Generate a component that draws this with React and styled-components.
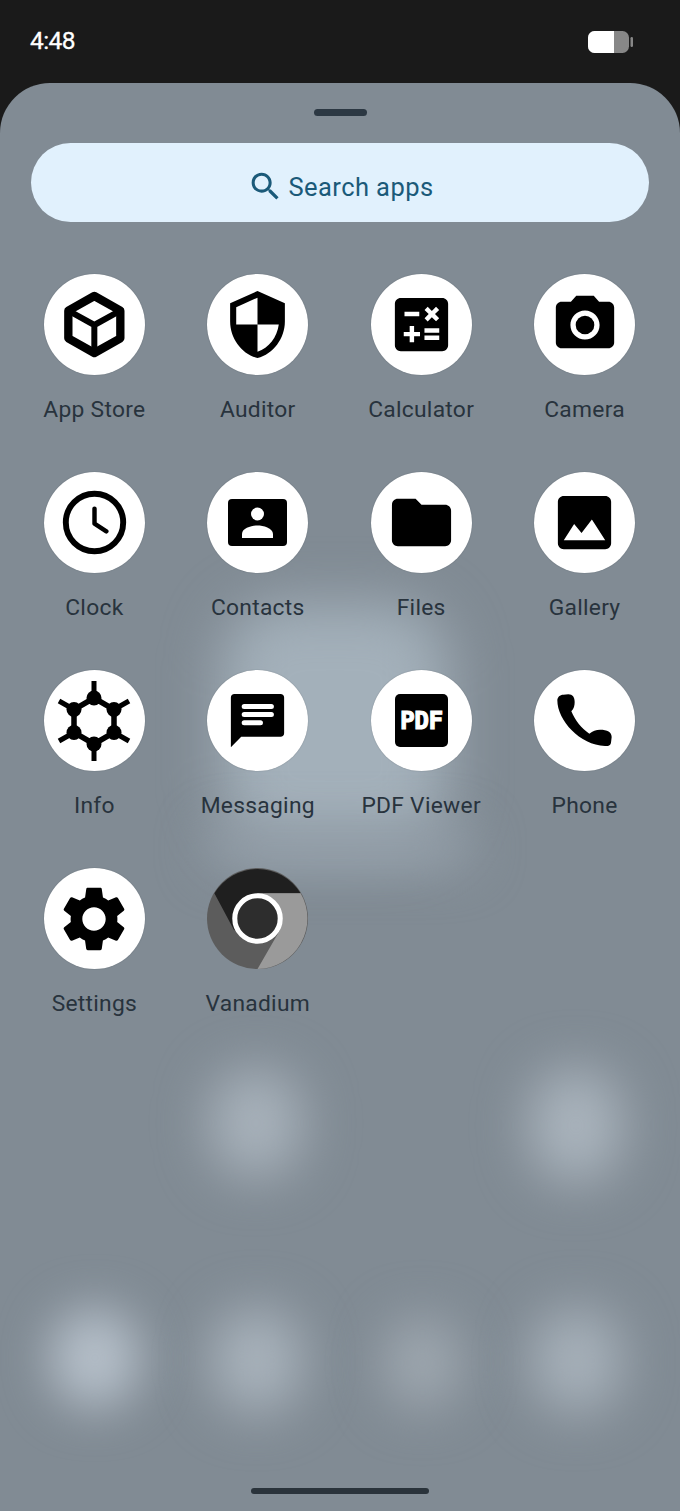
import React from "react";
import styled, { createGlobalStyle } from "styled-components";

const Global = createGlobalStyle`
  html, body { margin: 0; padding: 0; background: #1a1a1a; }
  * { box-sizing: border-box; }
`;

const Phone = styled.div`
  width: 680px;
  height: 1511px;
  display: flex;
  flex-direction: column;
  background: #1a1a1a;
  font-family: Roboto, "Liberation Sans", sans-serif;
  overflow: hidden;
`;

const StatusBar = styled.header`
  height: 83px;
  flex: none;
  display: flex;
  align-items: flex-start;
  justify-content: space-between;
  padding: 25px 46px 0 30px;
`;

const Time = styled.span`
  color: #fff;
  font-size: 24.5px;
  font-weight: 400;
  line-height: 31px;
  letter-spacing: -0.6px;
  -webkit-text-stroke: 0.3px #fff;
`;

const Battery = styled.svg`
  width: 46px;
  height: 24px;
  margin-top: 5px;
`;

const Sheet = styled.main`
  flex: 1;
  position: relative;
  display: flex;
  flex-direction: column;
  background: #818b94;
  border-radius: 50px 50px 0 0;
  overflow: hidden;
`;

const Glow = styled.div`
  position: absolute;
  left: ${(p) => p.$x}px;
  top: ${(p) => p.$y}px;
  width: ${(p) => p.$w}px;
  height: ${(p) => p.$h}px;
  background: ${(p) => p.$c};
  border-radius: ${(p) => p.$r}px;
  filter: blur(${(p) => p.$b}px);
`;

const Handle = styled.div`
  position: relative;
  flex: none;
  width: 53px;
  height: 7px;
  margin: 26px auto 0;
  border-radius: 3.5px;
  background: #2c3843;
`;

const SearchBar = styled.div`
  position: relative;
  flex: none;
  height: 79px;
  margin: 27px 31px 0;
  padding: 8px 0 0;
  border-radius: 39.5px;
  background: #e1f1fd;
  display: flex;
  align-items: center;
  justify-content: center;
  gap: 5px;
  color: #1b5a79;
  font-size: 25.5px;
  letter-spacing: 0.42px;
`;

const Grid = styled.section`
  position: relative;
  display: grid;
  grid-template-columns: repeat(4, 163.4px);
  grid-auto-rows: 198px;
  margin: 52px 0 0 12.7px;
`;

const Tile = styled.div`
  display: flex;
  flex-direction: column;
  align-items: center;
`;

const Disc = styled.div`
  width: 101px;
  height: 101px;
  border-radius: 50%;
  background: #fff;
  display: flex;
  align-items: center;
  justify-content: center;
  box-shadow: 0 0 1px rgba(40, 50, 60, 0.5);
`;

const Glyph = styled.svg`
  width: ${(p) => p.$size}px;
  height: ${(p) => p.$size}px;
  display: block;
  flex: none;
`;

const Round = styled.svg`
  width: 101px;
  height: 101px;
  display: block;
`;

const Label = styled.span`
  margin-top: 20px;
  font-size: 22.8px;
  line-height: 30px;
  letter-spacing: 0.28px;
  color: #28333d;
  white-space: nowrap;
`;

const HomeBar = styled.div`
  position: relative;
  flex: none;
  width: 178px;
  height: 6px;
  margin: auto auto 17px;
  border-radius: 3px;
  background: #2a333b;
`;

const M = ({ d, size = 71, children }) => (
  <Glyph $size={size} viewBox="0 0 24 24" fill="#000">
    {d && <path d={d} />}
    {children}
  </Glyph>
);

const icons = {
  store: (
    <Glyph $size={71} viewBox="0 0 213 213" fill="none" stroke="#000" strokeLinejoin="round" strokeLinecap="round">
      <path d="M106 21 L184 65 L184 148 L106 192 L28 148 L28 65 Z" strokeWidth="25" />
      <path d="M28 65 L106 108 L184 65 M106 108 L106 192" strokeWidth="18" />
    </Glyph>
  ),
  shield: <M size={73} d="M12 1L3 5v6c0 5.55 3.84 10.74 9 12 5.16-1.26 9-6.45 9-12V5l-9-4zm0 10.99h7c-.53 4.12-3.28 7.79-7 8.94V12H5V6.3l7-3.11v8.8z" />,
  calc: <M d="M19 3H5c-1.1 0-2 .9-2 2v14c0 1.1.9 2 2 2h14c1.1 0 2-.9 2-2V5c0-1.1-.9-2-2-2zm-5.97 4.06L14.09 6l1.41 1.41L16.91 6l1.06 1.06-1.41 1.41 1.41 1.41-1.06 1.06-1.41-1.4-1.41 1.41-1.06-1.06 1.41-1.41-1.41-1.42zm-6.78.66h5v1.5h-5v-1.5zM11.5 16h-2v2H8v-2H6v-1.5h2v-2h1.5v2h2V16zm6.5 1.25h-5v-1.5h5v1.5zm0-2.5h-5v-1.5h5v1.5z" />,
  camera: (
    <M size={70} d="M9 2L7.17 4H4c-1.1 0-2 .9-2 2v12c0 1.1.9 2 2 2h16c1.1 0 2-.9 2-2V6c0-1.1-.9-2-2-2h-3.17L15 2H9zm3 15c-2.76 0-5-2.24-5-5s2.24-5 5-5 5 2.24 5 5-2.24 5-5 5z">
      <circle cx="12" cy="12" r="3.2" />
    </M>
  ),
  clock: (
    <M>
      <circle cx="12" cy="12" r="9.7" fill="none" stroke="#000" strokeWidth="2" />
      <path d="M12 7.3V12.4L16 15" fill="none" stroke="#000" strokeWidth="1.5" strokeLinecap="round" strokeLinejoin="round" />
    </M>
  ),
  contacts: (
    <Glyph $size={71} viewBox="0 0 71 71">
      <rect x="6" y="12" width="59" height="47" rx="4" fill="#000" />
      <circle cx="35.5" cy="27" r="6.5" fill="#fff" />
      <path d="M20 51V47C20 41 30 38.5 35.5 38.5S51 41 51 47V51Z" fill="#fff" />
    </Glyph>
  ),
  files: <M d="M10 4H4c-1.1 0-1.99.9-1.99 2L2 18c0 1.1.9 2 2 2h16c1.1 0 2-.9 2-2V8c0-1.1-.9-2-2-2h-8l-2-2z" />,
  gallery: <M d="M21 19V5c0-1.1-.9-2-2-2H5c-1.1 0-2 .9-2 2v14c0 1.1.9 2 2 2h14c1.1 0 2-.9 2-2zM8.5 12.5l2.5 3.01L14.5 11l4.5 7H5l3.5-5.5z" />,
  info: (
    <Glyph $size={84} viewBox="-42 -42 84 84" fill="#000" stroke="#000" strokeLinecap="butt">
      <path d="M0 -23L20 -11.5V11.5L0 23L-20 11.5V-11.5Z" fill="none" strokeWidth="5.5" />
      <path d="M0 -40V-23M0 40V23M-35 -20L-20 -11.5M35 -20L20 -11.5M-35 20L-20 11.5M35 20L20 11.5" strokeWidth="5" />
      <g stroke="none">
        <circle cx="0" cy="-23" r="7.5" />
        <circle cx="0" cy="23" r="7.5" />
        <circle cx="-20" cy="-11.5" r="7.5" />
        <circle cx="20" cy="-11.5" r="7.5" />
        <circle cx="-20" cy="11.5" r="7.5" />
        <circle cx="20" cy="11.5" r="7.5" />
      </g>
    </Glyph>
  ),
  msg: (
    <M>
      <path d="M4.2 3H19.8C20.5 3 21 3.5 21 4.2V16.3C21 17 20.5 17.5 19.8 17.5H6.5L3 21V4.2C3 3.5 3.5 3 4.2 3Z" />
      <path d="M7.5 7.3H16.7M7.5 10H16.7M7.5 12.75H13" stroke="#fff" strokeWidth="1.7" strokeLinecap="round" />
    </M>
  ),
  pdf: (
    <Glyph $size={71} viewBox="0 0 71 71">
      <rect x="9" y="9" width="53" height="53" rx="5" fill="#000" />
      <text x="35.5" y="44" textAnchor="middle" fill="#fff" stroke="#fff" strokeWidth="1" fontFamily="'DejaVu Sans Mono', monospace" fontWeight="700" fontSize="24.5" letterSpacing="-0.5">PDF</text>
    </Glyph>
  ),
  phone: (
    <Glyph $size={71} viewBox="597 59 213 213">
      <path d="M640 88L655 87C668 87 674 96 674 110C674 120 672 130 664 138C675 165 695 190 718 205C728 197 738 193 750 193C772 193 785 200 785 215L783 232C782 240 775 243 765 242C690 240 622 165 622 105C622 95 630 88 640 88Z" />
    </Glyph>
  ),
  gear: <M size={78} d="M19.14 12.94c.04-.3.06-.61.06-.94 0-.32-.02-.64-.07-.94l2.03-1.58c.18-.14.23-.41.12-.61l-1.92-3.32c-.12-.22-.37-.29-.59-.22l-2.39.96c-.5-.38-1.03-.7-1.62-.94l-.36-2.54c-.04-.24-.24-.41-.48-.41h-3.84c-.24 0-.43.17-.47.41l-.36 2.54c-.59.24-1.13.57-1.62.94l-2.39-.96c-.22-.08-.47 0-.59.22L2.74 8.87c-.12.21-.08.47.12.61l2.03 1.58c-.05.3-.09.63-.09.94s.02.64.07.94l-2.03 1.58c-.18.14-.23.41-.12.61l1.92 3.32c.12.22.37.29.59.22l2.39-.96c.5.38 1.03.7 1.62.94l.36 2.54c.05.24.24.41.48.41h3.84c.24 0 .44-.17.47-.41l.36-2.54c.59-.24 1.13-.56 1.62-.94l2.39.96c.22.08.47 0 .59-.22l1.92-3.32c.12-.22.07-.47-.12-.61l-2.01-1.58zM12 15.6c-1.98 0-3.6-1.62-3.6-3.6s1.62-3.6 3.6-3.6 3.6 1.62 3.6 3.6-1.62 3.6-3.6 3.6z" />,
};

const apps = [
  ["App Store", "store"],
  ["Auditor", "shield"],
  ["Calculator", "calc"],
  ["Camera", "camera"],
  ["Clock", "clock"],
  ["Contacts", "contacts"],
  ["Files", "files"],
  ["Gallery", "gallery"],
  ["Info", "info"],
  ["Messaging", "msg"],
  ["PDF Viewer", "pdf"],
  ["Phone", "phone"],
  ["Settings", "gear"],
];

const glows = [
  { x: 222, y: 520, w: 226, h: 245, r: 60, b: 28, c: "#a3b0ba" },
  { x: 205, y: 745, w: 270, h: 40, r: 20, b: 24, c: "#939ea8" },
  { x: 210, y: 985, w: 92, h: 110, r: 46, b: 26, c: "#a8b2bb" },
  { x: 530, y: 985, w: 92, h: 115, r: 46, b: 26, c: "#aab4bd" },
  { x: 50, y: 1225, w: 90, h: 100, r: 45, b: 24, c: "#b5bfc9" },
  { x: 212, y: 1225, w: 90, h: 105, r: 45, b: 26, c: "#a9b3bc" },
  { x: 385, y: 1235, w: 75, h: 90, r: 38, b: 26, c: "#a0a9b1" },
  { x: 532, y: 1225, w: 90, h: 105, r: 45, b: 26, c: "#a7b1ba" },
];

export default function App() {
  return (
    <Phone>
      <Global />
      <StatusBar>
        <Time>4:48</Time>
        <Battery viewBox="0 0 46 24">
          <rect x="0" y="1" width="41" height="22" rx="6.5" fill="#878787" />
          <path d="M6.5 1H26V23H6.5A6.5 6.5 0 0 1 0 16.5V7.5A6.5 6.5 0 0 1 6.5 1Z" fill="#fff" />
          <rect x="42.5" y="7" width="2.5" height="10" rx="1.2" fill="#878787" />
        </Battery>
      </StatusBar>
      <Sheet>
        {glows.map((g, i) => (
          <Glow key={i} $x={g.x} $y={g.y} $w={g.w} $h={g.h} $r={g.r} $b={g.b} $c={g.c} />
        ))}
        <Handle />
        <SearchBar>
          <svg width="37" height="37" viewBox="0 0 24 24" fill="#1b5a79">
            <path d="M15.5 14h-.79l-.28-.27C15.41 12.59 16 11.11 16 9.5 16 5.91 13.09 3 9.5 3S3 5.91 3 9.5 5.91 16 9.5 16c1.61 0 3.09-.59 4.23-1.57l.27.28v.79l5 4.99L20.49 19l-4.99-5zm-6 0C7.01 14 5 11.99 5 9.5S7.01 5 9.5 5 14 7.01 14 9.5 11.99 14 9.5 14z" />
          </svg>
          Search apps
        </SearchBar>
        <Grid>
          {apps.map(([name, key]) => (
            <Tile key={name}>
              <Disc>{icons[key]}</Disc>
              <Label>{name}</Label>
            </Tile>
          ))}
          <Tile>
            <Round viewBox="0 0 100 100">
              <circle cx="50" cy="50" r="50" fill="#5c5c5c" />
              <path d="M7.3 25A50 50 0 0 1 92.7 25H50L27 62Z" fill="#1f1f1f" />
              <path d="M50 25H92.7A50 50 0 0 1 50 100L72 62Z" fill="#9a9a9a" />
              <circle cx="50" cy="50" r="22.5" fill="#2d2d2d" stroke="#fff" strokeWidth="5" />
            </Round>
            <Label>Vanadium</Label>
          </Tile>
        </Grid>
        <HomeBar />
      </Sheet>
    </Phone>
  );
}
